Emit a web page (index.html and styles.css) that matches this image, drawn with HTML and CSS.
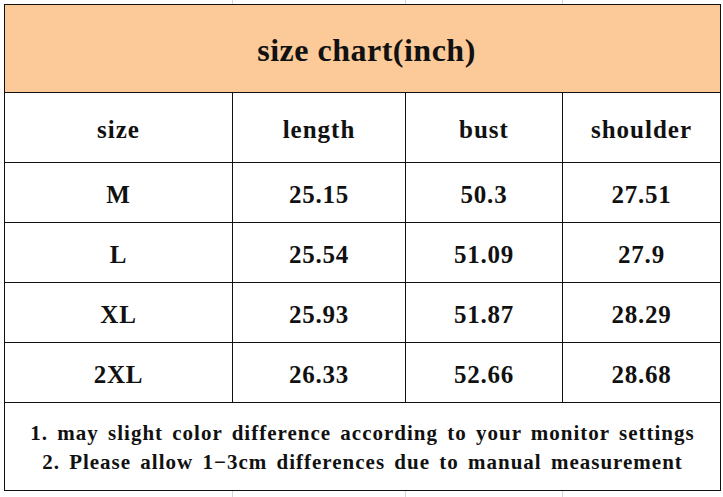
FILE: index.html
```html
<!DOCTYPE html>
<html>
<head>
<meta charset="utf-8">
<link rel="stylesheet" href="styles.css">
</head>
<body>
<div class="chart">
  <div class="title">size chart(inch)</div>
  <div class="cell head">size</div>
  <div class="cell head">length</div>
  <div class="cell head">bust</div>
  <div class="cell head">shoulder</div>

  <div class="cell">M</div>
  <div class="cell">25.15</div>
  <div class="cell">50.3</div>
  <div class="cell">27.51</div>

  <div class="cell">L</div>
  <div class="cell">25.54</div>
  <div class="cell">51.09</div>
  <div class="cell">27.9</div>

  <div class="cell">XL</div>
  <div class="cell">25.93</div>
  <div class="cell">51.87</div>
  <div class="cell">28.29</div>

  <div class="cell">2XL</div>
  <div class="cell">26.33</div>
  <div class="cell">52.66</div>
  <div class="cell">28.68</div>

  <div class="notes">
    <div>1. may slight color difference according to your monitor settings</div>
    <div>2. Please allow 1−3cm differences due to manual measurement</div>
  </div>
</div>
</body>
</html>
```
FILE: styles.css
```css
html, body {
  margin: 0;
  padding: 0;
}
body {
  padding: 4px;
  height: 497px;
  box-sizing: border-box;
  font-family: "Liberation Serif", "Times New Roman", serif;
  font-weight: bold;
  color: #111;
  background-color: #ffffff;
  background-image:
    linear-gradient(to right, transparent 232px, #d6d6d6 232px, #d6d6d6 233px, transparent 233px),
    linear-gradient(to right, transparent 405px, #d6d6d6 405px, #d6d6d6 406px, transparent 406px),
    linear-gradient(to right, transparent 562px, #d6d6d6 562px, #d6d6d6 563px, transparent 563px);
}
.chart {
  display: grid;
  grid-template-columns: 228px 173px 157px 158px;
  grid-template-rows: 88px 70px 60px 60px 60px 60px 88px;
  border-left: 1px solid #111;
  border-top: 1px solid #111;
  width: 717px;
  box-sizing: border-box;
  background: #ffffff;
}
.title {
  grid-column: 1 / 5;
  background: #fbca98;
  border-right: 1px solid #111;
  border-bottom: 1px solid #111;
  display: flex;
  align-items: center;
  justify-content: center;
  font-size: 32px;
  letter-spacing: 0.5px;
  padding-top: 3px;
  padding-left: 8px;
  box-sizing: border-box;
}
.cell {
  border-right: 1px solid #111;
  border-bottom: 1px solid #111;
  display: flex;
  align-items: center;
  justify-content: center;
  font-size: 25px;
  letter-spacing: 0.8px;
  padding-top: 4px;
  box-sizing: border-box;
}
.cell.head {
  letter-spacing: 1px;
  padding-top: 5px;
}
.notes {
  grid-column: 1 / 5;
  border-right: 1px solid #111;
  border-bottom: 1px solid #111;
  display: flex;
  flex-direction: column;
  align-items: center;
  justify-content: center;
  font-size: 21px;
  letter-spacing: 1px;
  word-spacing: 3px;
  line-height: 29px;
  padding-top: 3px;
  box-sizing: border-box;
}
```
